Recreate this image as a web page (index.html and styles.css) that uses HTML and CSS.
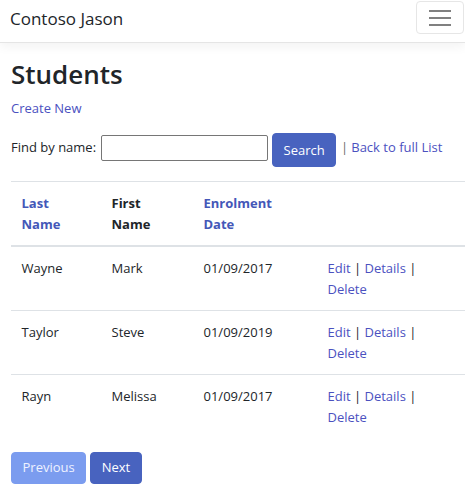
FILE: index.html
```html
<!DOCTYPE html>
<html lang="en">
<head>
<meta charset="utf-8">
<title>Students - Contoso Jason</title>
<link rel="stylesheet" href="styles.css">
</head>
<body>
<header class="navbar">
  <a class="brand" href="#">Contoso Jason</a>
  <button class="toggler" type="button" aria-label="Toggle navigation">
    <span class="bar"></span><span class="bar"></span><span class="bar"></span>
  </button>
</header>
<main class="container">
  <h2 class="title">Students</h2>
  <p class="line"><a class="link" href="#">Create New</a></p>
  <form class="find">
    <label class="find-label" for="q">Find by name:</label>
    <input class="find-input" id="q" type="text">
    <button class="btn btn-primary btn-search" type="submit">Search</button>
    <span class="sep">|</span>
    <a class="link find-back" href="#">Back to full List</a>
  </form>
  <table class="table">
    <colgroup>
      <col class="c1"><col class="c2"><col class="c3"><col class="c4">
    </colgroup>
    <thead>
      <tr>
        <th><a class="link head-link" href="#"><span class="wrap">Last Name</span></a></th>
        <th><span class="wrap">First Name</span></th>
        <th><a class="link head-link" href="#"><span class="wrap">Enrolment Date</span></a></th>
        <th></th>
      </tr>
    </thead>
    <tbody>
      <tr>
        <td>Wayne</td><td>Mark</td><td>01/09/2017</td>
        <td class="actions"><a class="link" href="#">Edit</a> | <a class="link" href="#">Details</a> | <a class="link" href="#">Delete</a></td>
      </tr>
      <tr>
        <td>Taylor</td><td>Steve</td><td>01/09/2019</td>
        <td class="actions"><a class="link" href="#">Edit</a> | <a class="link" href="#">Details</a> | <a class="link" href="#">Delete</a></td>
      </tr>
      <tr>
        <td>Rayn</td><td>Melissa</td><td>01/09/2017</td>
        <td class="actions"><a class="link" href="#">Edit</a> | <a class="link" href="#">Details</a> | <a class="link" href="#">Delete</a></td>
      </tr>
    </tbody>
  </table>
  <div class="pager">
    <a class="btn btn-disabled" href="#">Previous</a>
    <a class="btn btn-primary" href="#">Next</a>
  </div>
</main>
</body>
</html>
```

FILE: styles.css
```css
* { box-sizing: border-box; }
html, body { margin: 0; padding: 0; }
body {
  font-family: "Open Sans", "Noto Sans", sans-serif;
  font-size: 13px;
  line-height: 21px;
  color: #212529;
  background: #fff;
  overflow: hidden;
}
a { text-decoration: none; }
.link { color: #4b51bf; }

.navbar {
  display: flex;
  justify-content: space-between;
  align-items: flex-start;
  height: 43px;
  padding: 1px 1px 0 10px;
  border-bottom: 1px solid #e5e5e5;
  box-shadow: 0 4px 10px rgba(0,0,0,.05);
  margin-bottom: 14px;
}
.brand {
  color: #212529;
  font-size: 17px;
  line-height: 24px;
  padding-top: 6px;
}
.toggler {
  width: 48px;
  height: 33px;
  border: 1px solid #e6e6e6;
  border-radius: 4px;
  background: #fff;
  display: flex;
  flex-direction: column;
  align-items: center;
  justify-content: center;
  gap: 5px;
  padding: 0;
}
.bar {
  display: block;
  width: 22px;
  height: 2px;
  background: #808080;
}

.container { padding: 0 0 0 11px; }
.title {
  margin: 0 0 7px;
  font-size: 26px;
  line-height: 34px;
  font-weight: 600;
}
.line { margin: 0 0 14px; }

.find {
  display: flex;
  align-items: flex-start;
  height: 34px;
  margin-bottom: 14px;
}
.find-label { margin: 4px 4px 0 0; }
.find-input {
  width: 167px;
  height: 26px;
  border: 1px solid #767676;
  border-radius: 2px;
  margin: 2px 4px 0 1px;
  font: inherit;
}
.btn {
  display: inline-block;
  font-family: inherit;
  font-size: 13px;
  line-height: 21px;
  padding: 5px 10px;
  border: 1px solid transparent;
  border-radius: 4px;
  color: #fff;
  text-align: center;
}
.btn-primary { background: #4863bf; border-color: #4863bf; }
.btn-search { width: 64px; height: 34px; padding: 5px 0; cursor: pointer; }
.sep { margin: 4px 3px 0 5px; color: #6c6c6c; }
.find-back { margin-top: 4px; }

.table {
  width: 454px;
  border-collapse: collapse;
  table-layout: fixed;
  margin-bottom: 14px;
}
.c1 { width: 90px; }
.c2 { width: 92px; }
.c3 { width: 124px; }
.c4 { width: 148px; }
.table th, .table td {
  padding: 10.5px;
  text-align: left;
  vertical-align: top;
  border-top: 1px solid #dee2e6;
}
.table thead th {
  border-bottom: 2px solid #dee2e6;
  font-weight: 700;
  vertical-align: bottom;
}
.head-link { color: #4457b8; }
.wrap { display: inline-block; width: min-content; }
.actions { padding-right: 30px; }

.pager { display: flex; gap: 4px; }
.pager .btn { height: 32px; padding: 4px 10.5px; }
.btn-disabled { background: #7b9cef; border-color: #7b9cef; color: #eef2ff; }
```
